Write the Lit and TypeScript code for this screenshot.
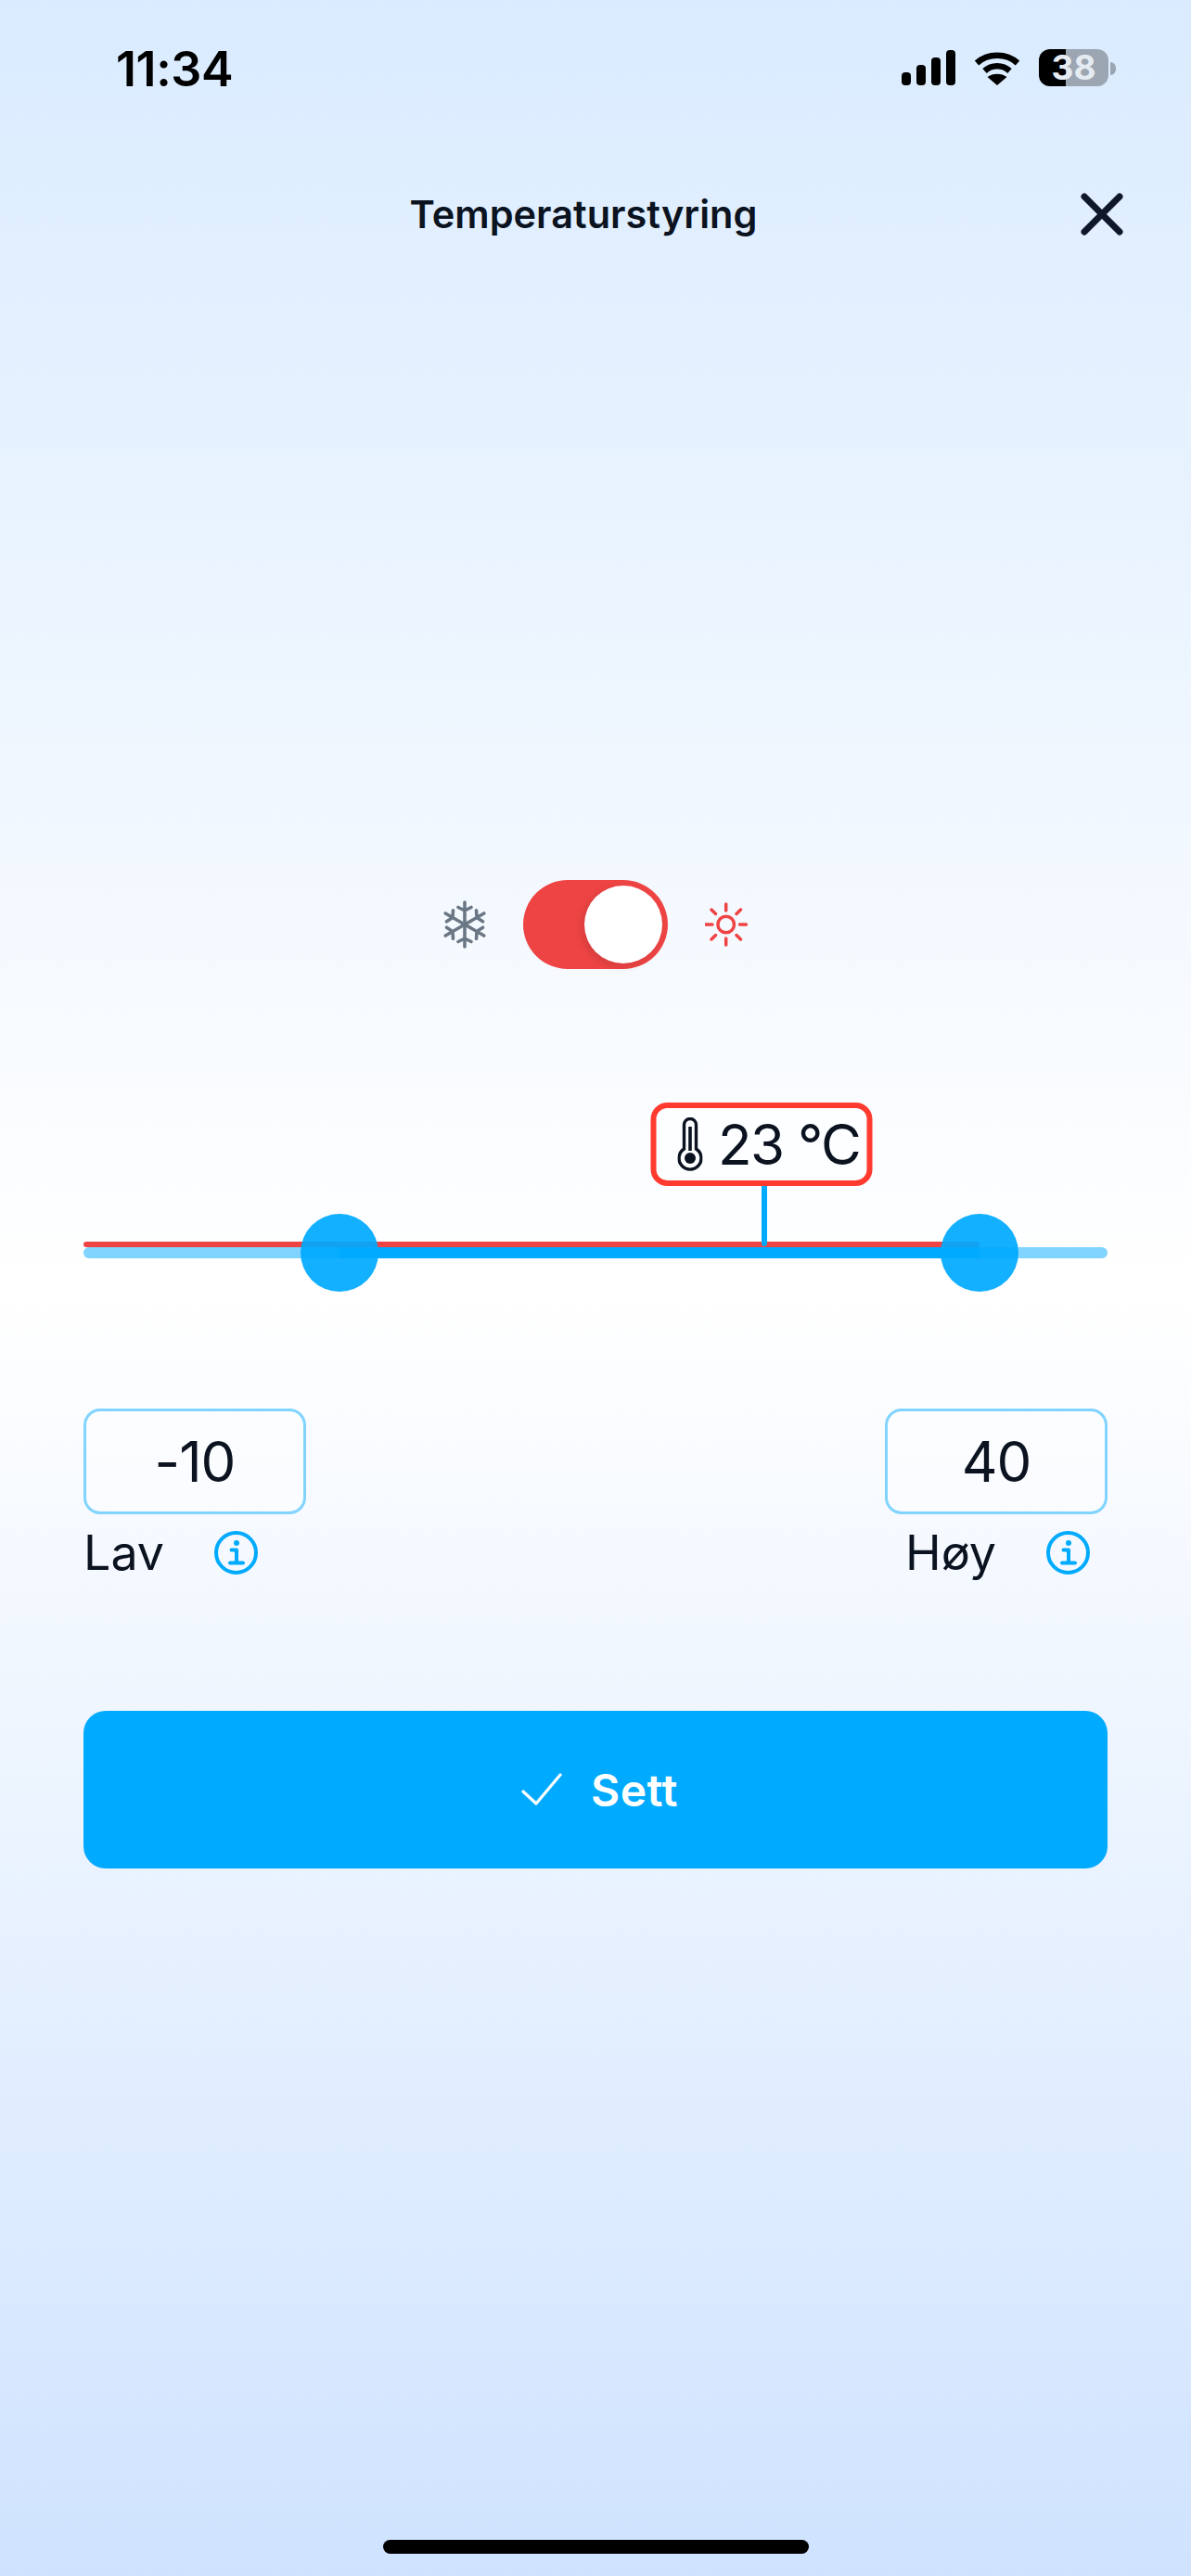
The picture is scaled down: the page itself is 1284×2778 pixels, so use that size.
import { LitElement, html, css, svg } from "lit";
import { customElement } from "lit/decorators.js";

const MIN = -30, MAX = 50, LOW = -10, HIGH = 40, CURRENT = 23;
const pct = (v: number) => ((v - MIN) / (MAX - MIN)) * 100;

const infoIcon = html`<svg class="info" viewBox="0 0 47 47" fill="none" stroke="#00AAFF">
  <circle cx="23.5" cy="23.5" r="21.5" stroke-width="4"/>
  <circle cx="24" cy="13" r="3" fill="#00AAFF" stroke="none"/>
  <path d="M18.5 20.5h5.5v13.5M17 34.5h14" stroke-width="4" stroke-linecap="round" stroke-linejoin="round"/>
</svg>`;

function arm(angle: number) {
  return svg`<g transform="rotate(${angle} 25 27)"><path d="M25 27V3M18 8.5l7 3.5 7-3.5"/></g>`;
}

@customElement("app-root")
export class AppRoot extends LitElement {
  static styles = css`
    :host { display: block; width: 1284px; height: 2778px; font-family: Inter, "Liberation Sans", sans-serif; color: #0B1320; }
    * { box-sizing: border-box; }
    .page { width: 1284px; height: 2778px; display: flex; flex-direction: column; background: linear-gradient(180deg, #DAEBFF 0%, #FFFFFF 50%, #CFE3FF 100%); }
    .status { height: 92px; padding: 53px 89px 0 125px; display: flex; justify-content: space-between; align-items: center; flex: none; }
    .time { margin-top: 4px; font-size: 52px; font-weight: 600; line-height: 46px; color: #000; letter-spacing: -0.4px; }
    .sys { display: flex; align-items: center; gap: 20px; }
    .sig { width: 58px; height: 38px; display: block; }
    .wifi { width: 50px; height: 38px; display: block; }
    .batt { width: 75px; height: 40px; border-radius: 12px; background: linear-gradient(90deg, #000 0 29px, #9CA6B2 29px); color: #E6EBF2; font-size: 37px; font-weight: 700; line-height: 40px; text-align: center; }
    .battwrap { position: relative; margin-right: -8px; padding-right: 8px; }
    .nub { position: absolute; right: 0; top: 14px; width: 6px; height: 14px; border-radius: 0 7px 7px 0; background: #9CA6B2; }
    .header { margin-top: 94px; height: 90px; display: grid; grid-template-columns: 1fr auto 1fr; align-items: center; padding: 0 72px 0 46px; flex: none; }
    .title { font-size: 41.5px; font-weight: 600; line-height: 50px; grid-column: 2; }
    .close { justify-self: end; grid-column: 3; width: 48px; height: 48px; display: block; }
    .mode { margin-top: 673px; display: flex; justify-content: center; align-items: center; gap: 40px; flex: none; }
    .mode svg { width: 48px; height: 54px; display: block; }
    .toggle { width: 156px; height: 96px; border-radius: 48px; background: #EF4444; padding: 6px; display: flex; justify-content: flex-end; }
    .knob { width: 84px; height: 84px; border-radius: 50%; background: #fff; box-shadow: -3px 3px 10px rgba(0,0,0,.12); }
    .slider { position: relative; margin: 144px 90px 0; height: 204px; flex: none; }
    .rail { position: absolute; left: 0; right: 0; top: 156px; height: 12px; border-radius: 6px; background: #80D4FF; }
    .fill { position: absolute; top: 156px; height: 12px; background: #00AAFF; }
    .red { position: absolute; left: 0; top: 150px; height: 6px; border-radius: 3px; background: #EF4444; }
    .thumb { position: absolute; top: 120px; width: 84px; height: 84px; margin-left: -42px; border-radius: 50%; background: rgba(0,170,255,.93); }
    .stem { position: absolute; top: 90px; width: 6px; height: 65px; border-radius: 0 0 3px 3px; background: #00AAFF; }
    .tip { position: absolute; top: 0; height: 90px; width: 239px; transform: translateX(-50%); border: 6px solid #FF3B30; border-radius: 18px; background: #FDFEFF; display: flex; align-items: center; padding-left: 23px; gap: 16px; font-size: 60px; letter-spacing: -1.5px; line-height: 70px; white-space: nowrap; }
    .tip svg { width: 27px; height: 58px; display: block; flex: none; }
    .fields { margin: 126px 90px 0; display: flex; justify-content: space-between; flex: none; }
    .field { width: 240px; }
    .box { height: 114px; border: 3px solid #80D4FF; border-radius: 18px; background: rgba(255,255,255,.4); display: flex; align-items: center; justify-content: center; font-size: 60px; letter-spacing: -1px; line-height: 70px; }
    .lab { margin-top: 18px; display: flex; align-items: center; gap: 54px; height: 47px; font-size: 52px; line-height: 47px; }
    .lab.high { padding-left: 22px; }
    .info { width: 47px; height: 47px; display: block; flex: none; }
    .go { margin: 147px 90px 0; height: 170px; border-radius: 24px; background: #00AAFF; color: #fff; display: flex; align-items: center; justify-content: center; gap: 31px; padding-left: 9px; font-size: 48px; font-weight: 600; letter-spacing: 0.5px; flex: none; }
    .go svg { width: 44px; height: 36px; display: block; flex: none; }
    .spacer { flex: 1; }
    .home { width: 459px; height: 15px; border-radius: 7.5px; background: #000; margin: 0 auto 24px; flex: none; }
  `;

  render() {
    return html`<div class="page">
      <div class="status">
        <div class="time">11:34</div>
        <div class="sys">
          <svg class="sig" viewBox="0 0 58 38" fill="#000">
            <rect x="0" y="24" width="10" height="14" rx="4"/>
            <rect x="16" y="16" width="10" height="22" rx="4"/>
            <rect x="32" y="8" width="10" height="30" rx="4"/>
            <rect x="48" y="0" width="10" height="38" rx="4"/>
          </svg>
          <svg class="wifi" viewBox="0 0 50 38" fill="none" stroke="#000" stroke-width="6.5">
            <path d="M3 14C15 3 35 3 47 14"/>
            <path d="M11.5 22.5C19 15.5 31 15.5 38.5 22.5"/>
            <path d="M25 38L14.5 29C20 24.5 30 24.5 35.5 29Z" fill="#000" stroke="none"/>
          </svg>
          <div class="battwrap"><div class="batt">38</div><div class="nub"></div></div>
        </div>
      </div>
      <div class="header">
        <div class="title">Temperaturstyring</div>
        <svg class="close" viewBox="0 0 48 48" fill="none" stroke="#0F172A" stroke-width="7" stroke-linecap="round"><path d="M5 5l38 38M43 5L5 43"/></svg>
      </div>
      <div class="mode">
        <svg viewBox="0 0 48 54" fill="none" stroke="#6B7785" stroke-width="3.6" stroke-linecap="round" stroke-linejoin="round">
          ${[0, 60, 120, 180, 240, 300].map(arm)}
        </svg>
        <div class="toggle"><div class="knob"></div></div>
        <svg viewBox="0 0 48 54" fill="none" stroke="#EF4444" stroke-width="3.5" stroke-linecap="round">
          <circle cx="22.7" cy="27" r="8.8"/>
          <path d="M22.7 5v7M22.7 42v7M1 27h7M37.5 27h7M7 11l4.5 4.5M34 38.5l4.5 4.5M38.5 11L34 15.5M11.5 38.5L7 43"/>
        </svg>
      </div>
      <div class="slider">
        <div class="rail"></div>
        <div class="red" style="width:${pct(HIGH)}%"></div>
        <div class="fill" style="left:${pct(LOW)}%;width:${pct(HIGH) - pct(LOW)}%"></div>
        <div class="stem" style="left:${pct(CURRENT)}%"></div>
        <div class="thumb" style="left:${pct(LOW)}%"></div>
        <div class="thumb" style="left:${pct(HIGH)}%"></div>
        <div class="tip" style="left:${pct(CURRENT)}%">
          <svg viewBox="0 0 27 58" fill="none" stroke="#0B1320" stroke-width="3.4">
            <path d="M7 34V8a6.5 6.5 0 0 1 13 0v26a12 12 0 1 1-13 0Z"/>
            <path d="M13.5 10v26" stroke-width="3.6"/>
            <circle cx="13.5" cy="44" r="6" fill="#0B1320" stroke="none"/>
          </svg>
          <span>${CURRENT} °C</span>
        </div>
      </div>
      <div class="fields">
        <div class="field">
          <div class="box">${LOW}</div>
          <div class="lab"><span>Lav</span>${infoIcon}</div>
        </div>
        <div class="field">
          <div class="box">${HIGH}</div>
          <div class="lab high"><span>Høy</span>${infoIcon}</div>
        </div>
      </div>
      <div class="go">
        <svg viewBox="0 0 44 36" fill="none" stroke="#fff" stroke-width="3.2" stroke-linecap="round" stroke-linejoin="round"><path d="M2 20l14 13L42 2"/></svg>
        <span>Sett</span>
      </div>
      <div class="spacer"></div>
      <div class="home"></div>
    </div>`;
  }
}
